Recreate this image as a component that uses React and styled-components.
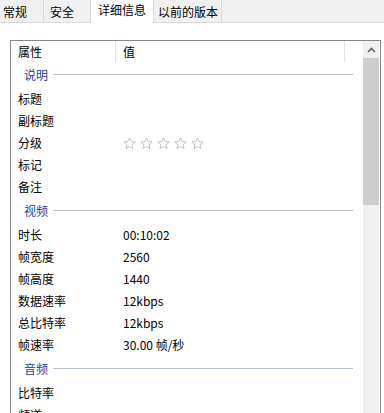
import React from "react";
import styled, { createGlobalStyle } from "styled-components";

const GlobalStyle = createGlobalStyle`
	html, body {
		margin: 0;
		padding: 0;
		background: #ffffff;
	}
	body {
		font-family: "Noto Sans CJK SC", "Noto Sans", sans-serif;
		font-size: 12px;
		color: #000000;
	}
`;

const Window = styled.div`
	width: 384px;
	height: 413px;
	overflow: hidden;
	background: #ffffff;
`;

const TabStrip = styled.div`
	display: flex;
	height: 23px;
	box-sizing: border-box;
	background: #f0f0f0;
	border-bottom: 1px solid #d9d9d9;
`;

const Tab = styled.div`
	flex: none;
	width: ${({ $w }) => $w}px;
	height: ${({ $active }) => ($active ? "23px" : "22px")};
	box-sizing: border-box;
	padding-left: ${({ $pad }) => $pad}px;
	padding-top: ${({ $active }) => ($active ? "0" : "2px")};
	line-height: 20px;
	white-space: nowrap;
	background: ${({ $active }) => ($active ? "#ffffff" : "#f0f0f0")};
	border-right: 1px solid #d9d9d9;
`;

const Panel = styled.div`
	padding: 17px 0 0 10px;
`;

const ListBox = styled.div`
	display: flex;
	width: 371px;
	height: 400px;
	box-sizing: border-box;
	border: 1px solid #828790;
	border-bottom: none;
`;

const Content = styled.div`
	width: 352px;
	flex: none;
`;

const Header = styled.div`
	display: flex;
	height: 21px;
`;

const HeaderCell = styled.div`
	width: ${({ $w }) => $w}px;
	flex: none;
	box-sizing: border-box;
	padding-left: ${({ $pad }) => $pad}px;
	line-height: 22px;
	border-right: ${({ $divider }) => ($divider ? "1px solid #e5e5e5" : "none")};
`;

const Group = styled.div`
	display: flex;
	align-items: center;
	gap: 5px;
	height: 26px;
	box-sizing: border-box;
	padding: 0 10px 1px 13px;
	color: #1e3f9e;
	line-height: 24px;
`;

const GroupLine = styled.div`
	flex: 1;
	height: 1px;
	background: #b4bcd6;
`;

const Row = styled.div`
	display: grid;
	grid-template-columns: 105px 1fr;
	height: 22px;
	line-height: 22px;
	padding-left: 7px;
	white-space: nowrap;
`;

const Stars = styled.div`
	display: flex;
	gap: 4px;
	align-items: center;
	height: 22px;
`;

const ScrollBar = styled.div`
	width: 16px;
	flex: none;
	margin-right: 1px;
	background: #f0f0f0;
	display: flex;
	flex-direction: column;
`;

const ArrowButton = styled.div`
	height: 17px;
	display: flex;
	align-items: center;
	justify-content: center;
	color: #606060;
`;

const Thumb = styled.div`
	height: 147px;
	background: #cdcdcd;
`;

const Star = () => (
	<svg width="13" height="13" viewBox="0 0 13 13">
		<path
			d="M6.5 0.8 L8.1 4.6 L12.2 4.9 L9.1 7.6 L10.0 11.7 L6.5 9.5 L3.0 11.7 L3.9 7.6 L0.8 4.9 L4.9 4.6 Z"
			fill="none"
			stroke="#c3c3c3"
			strokeWidth="1"
		/>
	</svg>
);

const sections = [
	{
		title: "说明",
		rows: [["标题"], ["副标题"], ["分级", "stars"], ["标记"], ["备注"]],
	},
	{
		title: "视频",
		rows: [
			["时长", "00:10:02"],
			["帧宽度", "2560"],
			["帧高度", "1440"],
			["数据速率", "12kbps"],
			["总比特率", "12kbps"],
			["帧速率", "30.00 帧/秒"],
		],
	},
	{
		title: "音频",
		rows: [["比特率"], ["频道"]],
	},
];

const tabs = [
	{ label: "常规", w: 44, pad: 3 },
	{ label: "安全", w: 47, pad: 6 },
	{ label: "详细信息", w: 63, pad: 7, active: true },
	{ label: "以前的版本", w: 68, pad: 4 },
];

export default function App() {
	return (
		<Window>
			<GlobalStyle />
			<TabStrip>
				{tabs.map((t) => (
					<Tab key={t.label} $w={t.w} $pad={t.pad} $active={t.active}>
						{t.label}
					</Tab>
				))}
			</TabStrip>
			<Panel>
				<ListBox>
					<Content>
						<Header>
							<HeaderCell $w={105} $pad={7} $divider>
								属性
							</HeaderCell>
							<HeaderCell $w={229} $pad={7} $divider>
								值
							</HeaderCell>
						</Header>
						{sections.map((s) => (
							<React.Fragment key={s.title}>
								<Group>
									{s.title}
									<GroupLine />
								</Group>
								{s.rows.map(([label, value]) => (
									<Row key={label}>
										<span>{label}</span>
										{value === "stars" ? (
											<Stars>
												{[0, 1, 2, 3, 4].map((i) => (
													<Star key={i} />
												))}
											</Stars>
										) : (
											<span>{value}</span>
										)}
									</Row>
								))}
							</React.Fragment>
						))}
					</Content>
					<ScrollBar>
						<ArrowButton>
							<svg width="9" height="6" viewBox="0 0 9 6">
								<path d="M1 5 L4.5 1.5 L8 5" fill="none" stroke="currentColor" strokeWidth="1.6" />
							</svg>
						</ArrowButton>
						<Thumb />
					</ScrollBar>
				</ListBox>
			</Panel>
		</Window>
	);
}
